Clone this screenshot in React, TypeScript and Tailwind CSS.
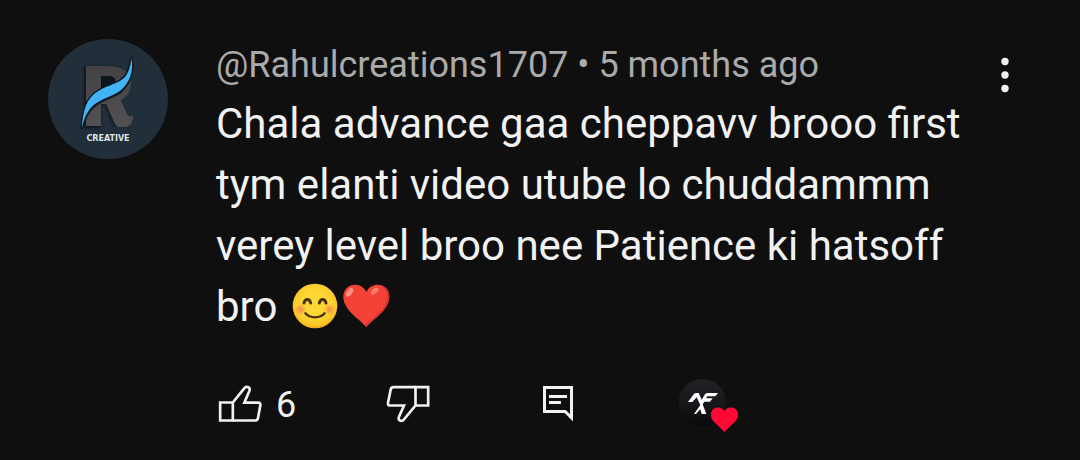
import React from "react";

function ChannelAvatar() {
  return (
    <svg viewBox="0 0 120 120" className="size-full" role="img" aria-label="Rahulcreations1707">
      <defs>
        <linearGradient id="letter" x1="0" y1="0" x2="0" y2="1">
          <stop offset="0" stopColor="#434346" />
          <stop offset="1" stopColor="#525052" />
        </linearGradient>
        <filter id="soft" x="-20%" y="-20%" width="140%" height="140%">
          <feGaussianBlur stdDeviation="1.2" />
        </filter>
      </defs>
      <circle cx="60" cy="60" r="60" fill="#222e3a" />
      <path
        d="M36 27h23c15 0 22 6 22 17 0 8-4 13-9 16l8 21v6H66l-9-21h-4v23H36z"
        fill="#0f161d"
        filter="url(#soft)"
      />
      <path
        fillRule="evenodd"
        d="M38 27h23c15 0 22 7 22 17 0 8-4 14-10 17l6 14c1 2 3 3 6 2v2c-1 6-4 9-8 9h-6c-2 0-3-1-4-3l-9-20h-5v22H38zM53 37v17h8c5 0 7-3 7-9 0-5-2-8-7-8z"
        fill="url(#letter)"
      />
      <path
        d="M83.500 19C82 31 79 38 72 42c-5 3-13 5-20 9-11 6-17 16-18 38 3-13 8-21 18-26 7-4 15-6 21-11 8-7 13-19 10.500-33z"
        fill="#101a24"
        stroke="#101a24"
        strokeWidth="3"
        strokeLinejoin="round"
      />
      <path
        d="M83.500 19C82 31 79 38 72 42c-5 3-13 5-20 9-11 6-17 16-18 38 3-14 8-22 18-27 7-4 15-6 21-11 8-7 13-18 10.500-32z"
        fill="#41b4f5"
      />
      <text
        x="60"
        y="102"
        textAnchor="middle"
        fill="#dce3e8"
        className="font-['DejaVu_Sans',sans-serif] text-[8px] font-bold"
      >
        CREATIVE
      </text>
    </svg>
  );
}

function SmileEmoji() {
  return (
    <svg viewBox="0 0 138 138" className="inline-block size-[46px]" role="img" aria-label="😊">
      <defs>
        <radialGradient id="face" cx="0.5" cy="0.45" r="0.55">
          <stop offset="0.5" stopColor="#fdd835" />
          <stop offset="0.85" stopColor="#fbc92c" />
          <stop offset="1" stopColor="#f2a81f" />
        </radialGradient>
        <radialGradient id="blush">
          <stop offset="0" stopColor="#f4734e" stopOpacity="0.7" />
          <stop offset="0.4" stopColor="#f4734e" stopOpacity="0.5" />
          <stop offset="1" stopColor="#f4734e" stopOpacity="0" />
        </radialGradient>
      </defs>
      <circle cx="69" cy="69" r="67" fill="url(#face)" />
      <circle cx="26" cy="79" r="17" fill="url(#blush)" />
      <circle cx="113" cy="79" r="17" fill="url(#blush)" />
      <g fill="none" stroke="#49300f" strokeLinecap="round">
        <path d="M36 60c3-14 17-14 20 0M82 60c3-14 17-14 20 0" strokeWidth="9" />
        <path d="M40 91c14 16 44 16 58 0" strokeWidth="7" />
      </g>
    </svg>
  );
}

function HeartEmoji() {
  return (
    <svg viewBox="0 0 144 138" className="inline-block h-[46px] w-[48px]" role="img" aria-label="❤️">
      <path
        d="M73 133C60 112 4 84 4 41 4 2 56-8 73 27 90-8 142 2 142 41c0 43-56 71-69 92z"
        fill="#f44336"
      />
      <path d="M112 6c23 2 30 21 30 36-1 42-56 70-69 91l-4-6c22-21 62-44 66-82 2-18-6-32-23-39z" fill="#d0342f" />
      <ellipse cx="23" cy="28" rx="8" ry="15" transform="rotate(34 23 28)" fill="#ff8d7d" />
      <ellipse cx="98" cy="24" rx="7" ry="14" transform="rotate(48 98 24)" fill="#ff7d6d" />
    </svg>
  );
}

function LikeIcon() {
  return (
    <svg viewBox="24 36 132 132" className="size-11" fill="none" stroke="#f1f1f1" strokeWidth="8" aria-hidden="true">
      <path d="M30.500 94.500h38v54h-38z" />
      <path d="M68.500 94.500 102 53c4-6 10-6 14-4 4 3 4 6 2 11l-15 35h41c6 0 8 3 7 8l-7 38c-1 5-3 7.500-8 7.500H68.500" />
    </svg>
  );
}

function DislikeIcon() {
  return (
    <svg viewBox="48 36 132 132" className="size-11" fill="none" stroke="#f1f1f1" strokeWidth="8" aria-hidden="true">
      <path d="M136.500 48.500h38v55h-38z" />
      <path d="M136.500 103.500 103 144c-4 6-10 6-14 4-4-3-4-6-2-11l15-33.500H61c-6 0-8-3-7-8l8-39c1-5 3-8 8-8h66.500" />
    </svg>
  );
}

function ReplyIcon() {
  return (
    <svg viewBox="66 36 96 132" className="h-11 w-8" fill="none" stroke="#f1f1f1" strokeWidth="9" aria-hidden="true">
      <path d="M73.500 49.500h81v91l-19-19h-62z" />
      <path d="M87 76.500h54M87 94.500h36" />
    </svg>
  );
}

function CreatorHeart() {
  return (
    <svg viewBox="36 36 192 168" className="h-14 w-16" aria-hidden="true">
      <defs>
        <linearGradient id="creator" x1="0" y1="0" x2="0" y2="1">
          <stop offset="0" stopColor="#212226" />
          <stop offset="0.5" stopColor="#17181b" />
          <stop offset="1" stopColor="#08080a" />
        </linearGradient>
      </defs>
      <circle cx="112" cy="113" r="71" fill="url(#creator)" />
      <g fill="#fff">
        <path d="M69 111l17-23q3-4 8-4h7l9 20 10-16q3-4 8-4h31l-8 10h-24l-4 6h20l-8 10h-17l-5 8 11 29h-14l-4-14-13 14H87l19-27-11-23-13 14z" />
      </g>
      <path
        d="M178 202l-32-31c-10-10-12-23-7-33 8-16 29-16 39-2 10-14 32-14 40 2 5 11 2 23-7 33z"
        fill="#ff0833"
        stroke="#101012"
        strokeWidth="3"
      />
    </svg>
  );
}

export default function App() {
  return (
    <main className="min-h-screen bg-[#0f0f0f] font-[Roboto,sans-serif] text-[#f1f1f1]">
      <article className="flex items-start pt-[39px] pr-[51px] pl-12">
        <a href="#channel" className="size-[120px] shrink-0">
          <ChannelAvatar />
        </a>
        <div className="ml-12 min-w-0 flex-1">
          <header className="pb-0.5 text-[36px] leading-[52px] text-[#aaaaaa]">
            <a href="#channel">@Rahulcreations1707</a> • <time>5 months ago</time>
          </header>
          <p className="text-[42px] leading-[61px]">
            Chala advance gaa cheppavv brooo first tym elanti video utube lo chuddammm verey level broo nee Patience ki
            hatsoff bro{" "}
            <span className="ml-1 inline-flex h-[46px] items-center gap-1 align-[-8px]">
              <SmileEmoji />
              <HeartEmoji />
            </span>
          </p>
          <div className="mt-10 flex h-14 items-center">
            <button type="button" aria-label="Like, 6 likes" className="ml-0.5 flex items-center gap-3.5">
              <LikeIcon />
              <span className="text-[36px] leading-[48px]">6</span>
            </button>
            <button type="button" aria-label="Dislike" className="ml-[90px]">
              <DislikeIcon />
            </button>
            <button type="button" aria-label="Reply" className="ml-28">
              <ReplyIcon />
            </button>
            <button type="button" aria-label="Hearted by creator" className="ml-[103px]">
              <CreatorHeart />
            </button>
          </div>
        </div>
        <button type="button" aria-label="More options" className="flex w-12 shrink-0 justify-center pt-[17px]">
          <svg viewBox="0 0 12 38" className="h-[38px] w-3" fill="#f1f1f1" aria-hidden="true">
            <circle cx="6" cy="5.500" r="3.700" />
            <circle cx="6" cy="19" r="3.700" />
            <circle cx="6" cy="32.500" r="3.700" />
          </svg>
        </button>
      </article>
    </main>
  );
}
